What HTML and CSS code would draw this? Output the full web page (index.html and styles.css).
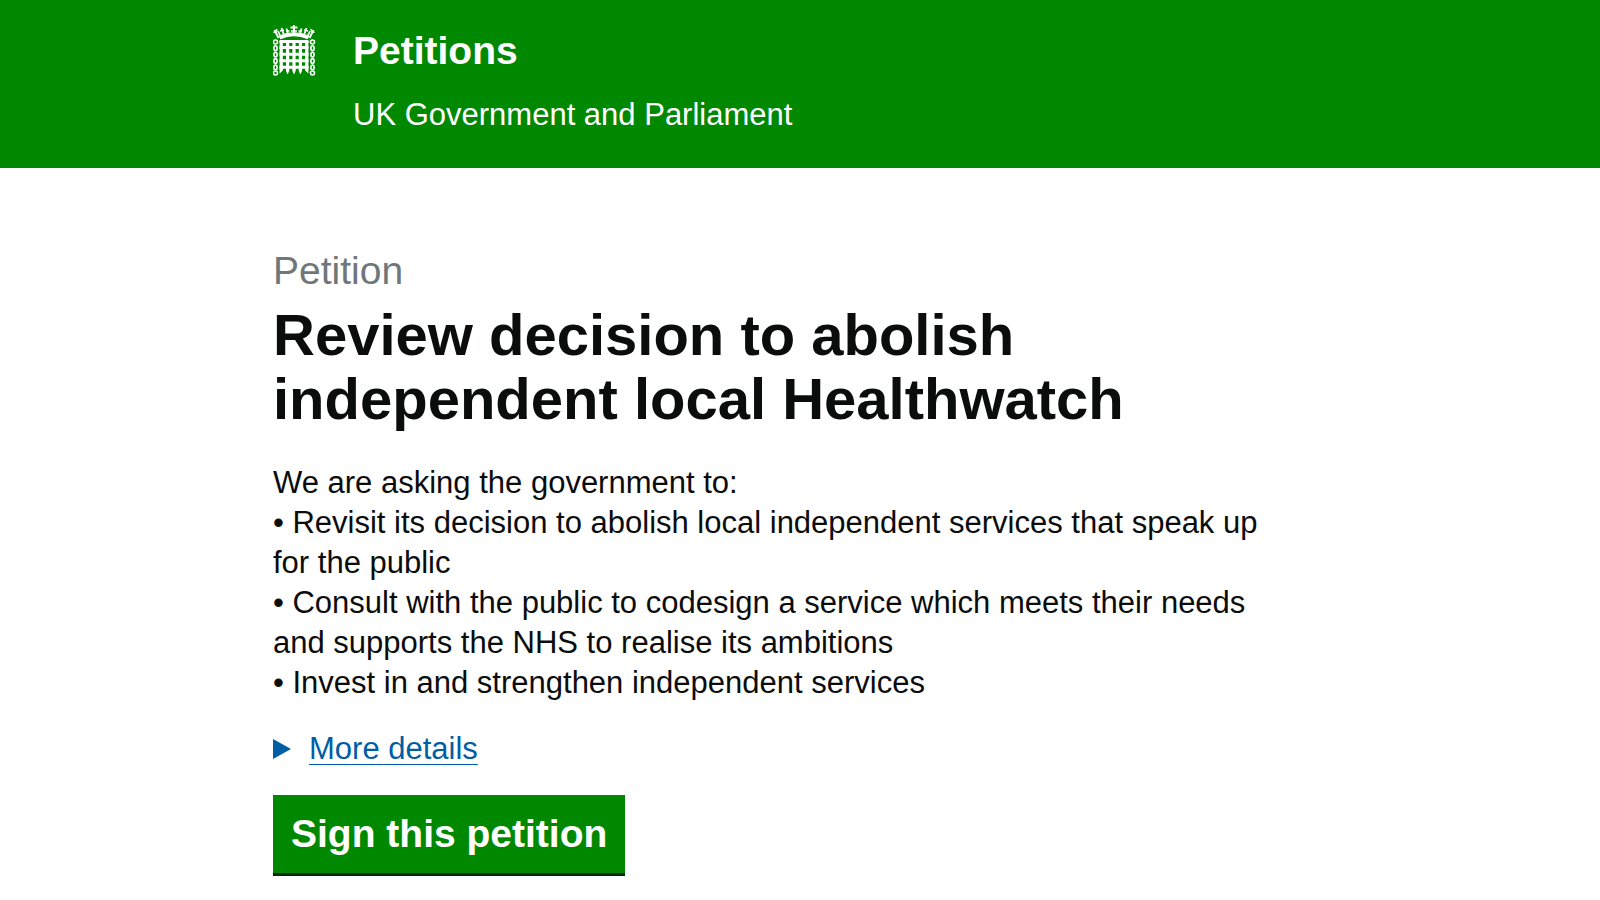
FILE: index.html
```html
<!DOCTYPE html>
<html lang="en">
<head>
<meta charset="utf-8">
<meta name="viewport" content="width=device-width, initial-scale=1">
<title>Review decision to abolish independent local Healthwatch - Petitions</title>
<link rel="stylesheet" href="styles.css">
</head>
<body>
<header class="site-header">
  <div class="container header-inner">
    <svg class="portcullis" viewBox="1 0 43 52" aria-hidden="true">
      <g fill="none" stroke="#fff">
        <g stroke-width="1.6">
          <ellipse cx="3.500" cy="18" rx="2" ry="2"/><ellipse cx="3.500" cy="24.200" rx="1.600" ry="2.400"/><ellipse cx="3.500" cy="30.600" rx="1.600" ry="2.400"/><ellipse cx="3.500" cy="37" rx="1.600" ry="2.400"/><ellipse cx="3.500" cy="43.400" rx="1.600" ry="2.400"/><ellipse cx="3.500" cy="49" rx="2" ry="2"/>
          <ellipse cx="40.500" cy="18" rx="2" ry="2"/><ellipse cx="40.500" cy="24.200" rx="1.600" ry="2.400"/><ellipse cx="40.500" cy="30.600" rx="1.600" ry="2.400"/><ellipse cx="40.500" cy="37" rx="1.600" ry="2.400"/><ellipse cx="40.500" cy="43.400" rx="1.600" ry="2.400"/><ellipse cx="40.500" cy="49" rx="2" ry="2"/>
        </g>
        <path stroke-width="3" d="M7.500 17.400h29M7.500 23.600h29M7.500 30.200h29M7.500 36.800h29M7.500 43.200h29"/>
        <path stroke-width="3.200" d="M9.200 17v29M15.600 17v29M22 17v29M28.400 17v29M34.800 17v29"/>
        <path stroke-width="4" d="M7.500 13.500Q22 7 36.500 13.500"/>
        <path stroke-width="1.800" d="M6.500 14L2.500 6M8.500 12.500L6 7M37.500 14l4-8M35.500 12.500L38 7M12 11L9.500 4M16 10L14.500 4.500M32 11l2.500-7M28 10l1.500-5.500M22 10V1M18.500 3.500h7"/>
        <path stroke-width="1.500" d="M1.500 8Q4 9 5 5M39 5Q40 9 42.500 8M8 7l4-1M32 6l4 1M14 7h3.500M26.500 7H30M19 7h6"/>
      </g>
      <path fill="#fff" d="M7.600 45h3.200v1.500L7.600 49.500zM14 45h3.200v2L15.600 50.500 14 47zM20.400 45h3.200v2L22 50.500l-1.600-3.500zM26.800 45H30v2l-1.600 3.500-1.600-3.500zM33.200 45h3.200v4.500l-3.200-3z"/>
    </svg>
    <div class="branding">
      <a class="site-name" href="#">Petitions</a>
      <p class="tagline">UK Government and Parliament</p>
    </div>
  </div>
</header>
<main class="container content">
  <h1 class="title"><span class="kicker">Petition</span>Review decision to abolish independent local Healthwatch</h1>
  <p class="summary">We are asking the government to:<br>• Revisit its decision to abolish local independent services that speak up for the public<br>• Consult with the public to codesign a service which meets their needs and supports the NHS to realise its ambitions<br>• Invest in and strengthen independent services</p>
  <details class="details">
    <summary class="details-toggle"><svg class="arrow" viewBox="0 0 18 20" aria-hidden="true"><path fill="#005ea5" d="M0 0l18 10L0 20z"/></svg><span class="details-label">More details</span></summary>
  </details>
  <a class="button" href="#">Sign this petition</a>
</main>
</body>
</html>
```
FILE: styles.css
```css
body {
  margin: 0;
  background: #fff;
  color: #0b0c0c;
  font-family: "Liberation Sans", Arial, sans-serif;
  font-size: 31px;
  line-height: 40px;
}
.container {
  max-width: 1054px;
  margin: 0 auto;
}
.site-header {
  background: #008800;
  color: #fff;
}
.header-inner {
  display: flex;
  gap: 37px;
  padding: 24px 0 33px;
}
.portcullis {
  width: 43px;
  height: 52px;
}
.site-name {
  display: block;
  color: #fff;
  font-size: 39px;
  font-weight: 700;
  line-height: 54px;
  text-decoration: none;
}
.tagline {
  margin: 17px 0 0;
}
.content {
  padding-top: 71px;
}
.title {
  max-width: 1000px;
  margin: 0 0 32px;
  font-size: 58px;
  line-height: 64px;
}
.kicker {
  display: block;
  color: #6f777b;
  font-size: 39px;
  font-weight: 400;
}
.summary {
  max-width: 1000px;
  margin: 0 0 26px;
}
.details {
  margin-bottom: 26px;
}
.details-toggle {
  display: flex;
  align-items: center;
  gap: 18px;
  color: #005ea5;
  cursor: pointer;
  list-style: none;
}
.arrow {
  width: 18px;
  height: 20px;
}
.details-label {
  text-decoration: underline;
  text-decoration-thickness: 1px;
  text-underline-offset: 5px;
}
.button {
  display: inline-block;
  padding: 12px 18px;
  border-bottom: 3px solid #002d00;
  background: #008800;
  color: #fff;
  font-size: 39px;
  font-weight: 700;
  line-height: 54px;
  text-decoration: none;
}
```
